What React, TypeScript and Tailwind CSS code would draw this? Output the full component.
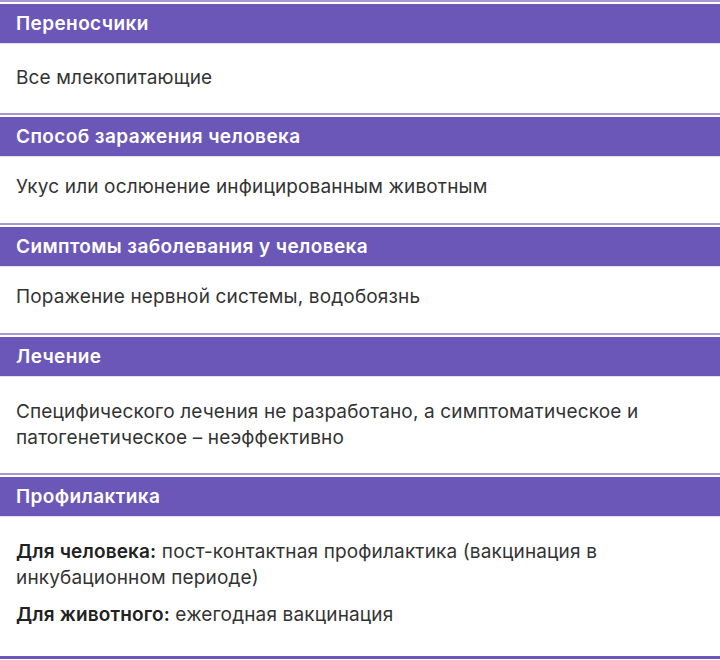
import React from "react";

const sections: { title: string; body: React.ReactNode; pad: string }[] = [
  { title: "Переносчики", body: <p>Все млекопитающие</p>, pad: "pt-[21px] pb-[22px]" },
  { title: "Способ заражения человека", body: <p>Укус или ослюнение инфицированным животным</p>, pad: "pt-[17px] pb-[23px]" },
  { title: "Симптомы заболевания у человека", body: <p>Поражение нервной системы, водобоязнь</p>, pad: "pt-[17px] pb-[23px]" },
  {
    title: "Лечение",
    body: <p>Специфического лечения не разработано, а симптоматическое и патогенетическое – неэффективно</p>,
    pad: "pt-[22px] pb-[22px]",
  },
  {
    title: "Профилактика",
    body: (
      <div className="flex flex-col gap-[11px]">
        <p>
          <span className="font-semibold text-[#222]">Для человека:</span> пост-контактная профилактика (вакцинация в инкубационном периоде)
        </p>
        <p>
          <span className="font-semibold text-[#222]">Для животного:</span> ежегодная вакцинация
        </p>
      </div>
    ),
    pad: "pt-[22px] pb-[28px]",
  },
];

export default function App() {
  return (
    <div className="w-[720px] h-[660px] overflow-hidden bg-white" style={{ fontFamily: "'Inter', 'Noto Sans', sans-serif" }}>
      {sections.map((s, i) => (
        <div key={i}>
          <div className="h-[2px] bg-[#a597d6]" />
          <div className="h-[2px] bg-white" />
          <div className="h-[40px] bg-[#6b57b8] border-b border-[#e4def3] flex items-center pt-[2px] px-4 text-white text-[19px] font-semibold tracking-[0.4px]">
            {s.title}
          </div>
          <div className={`pl-4 pr-[60px] ${s.pad} text-[19px] leading-[26px] tracking-[0.15px] text-[#333]`}>{s.body}</div>
        </div>
      ))}
      <div className="h-[3px] bg-[#6b57b8]" />
    </div>
  );
}
